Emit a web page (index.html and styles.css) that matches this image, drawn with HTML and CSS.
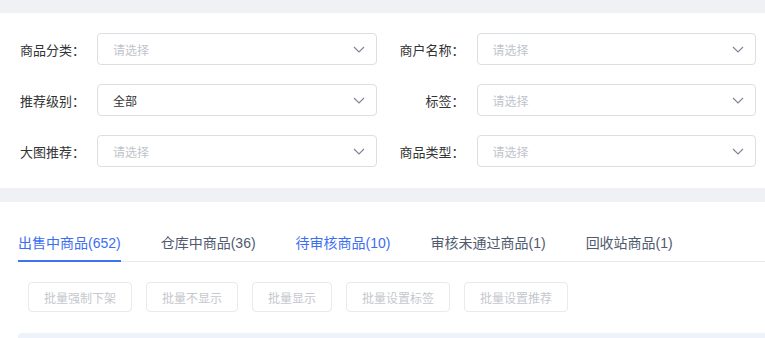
FILE: index.html
```html
<!DOCTYPE html>
<html lang="zh-CN">
<head>
    <meta charset="UTF-8">
    <meta name="viewport" content="width=device-width, initial-scale=1.0">
    <title>商品管理</title>
    <link rel="stylesheet" href="styles.css">
</head>
<body>
    <!-- Filter form -->
    <div class="filter-card">
        <form class="filter-grid">
            <div class="form-item">
                <label class="form-label">商品分类：</label>
                <div class="select placeholder"><span>请选择</span><svg class="arrow" viewBox="0 0 12 12"><polyline points="1,4 6,9 11,4"/></svg></div>
            </div>
            <div class="form-item">
                <label class="form-label">商户名称：</label>
                <div class="select placeholder"><span>请选择</span><svg class="arrow" viewBox="0 0 12 12"><polyline points="1,4 6,9 11,4"/></svg></div>
            </div>
            <div class="form-item">
                <label class="form-label">推荐级别：</label>
                <div class="select"><span>全部</span><svg class="arrow" viewBox="0 0 12 12"><polyline points="1,4 6,9 11,4"/></svg></div>
            </div>
            <div class="form-item">
                <label class="form-label">标签：</label>
                <div class="select placeholder"><span>请选择</span><svg class="arrow" viewBox="0 0 12 12"><polyline points="1,4 6,9 11,4"/></svg></div>
            </div>
            <div class="form-item">
                <label class="form-label">大图推荐：</label>
                <div class="select placeholder"><span>请选择</span><svg class="arrow" viewBox="0 0 12 12"><polyline points="1,4 6,9 11,4"/></svg></div>
            </div>
            <div class="form-item">
                <label class="form-label">商品类型：</label>
                <div class="select placeholder"><span>请选择</span><svg class="arrow" viewBox="0 0 12 12"><polyline points="1,4 6,9 11,4"/></svg></div>
            </div>
        </form>
    </div>

    <!-- Goods list -->
    <div class="list-card">
        <div class="tabs">
            <div class="tab active">出售中商品(652)</div>
            <div class="tab">仓库中商品(36)</div>
            <div class="tab hover">待审核商品(10)</div>
            <div class="tab">审核未通过商品(1)</div>
            <div class="tab">回收站商品(1)</div>
        </div>

        <div class="toolbar">
            <button type="button" disabled>批量强制下架</button>
            <button type="button" disabled>批量不显示</button>
            <button type="button" disabled>批量显示</button>
            <button type="button" disabled>批量设置标签</button>
            <button type="button" disabled>批量设置推荐</button>
        </div>

        <div class="table-head"></div>
    </div>
</body>
</html>
```

FILE: styles.css
```css
body {
    margin: 0;
    padding-top: 13px;
    background-color: #f0f1f5;
    font-family: "Liberation Sans", "Noto Sans CJK SC", sans-serif;
    color: #333;
}

.filter-card {
    background-color: #fff;
    padding: 20px 9px 21px 17px;
}

.filter-grid {
    display: grid;
    grid-template-columns: 1fr 1fr;
    column-gap: 20px;
    row-gap: 19px;
}

.form-item {
    display: flex;
    align-items: center;
}

.form-label {
    width: 80px;
    flex-shrink: 0;
    padding-right: 12px;
    box-sizing: border-box;
    text-align: right;
    font-size: 13px;
    color: #333;
    white-space: nowrap;
}

.select {
    flex: 1;
    height: 32px;
    display: flex;
    align-items: center;
    justify-content: space-between;
    padding: 0 11px 0 15px;
    box-sizing: border-box;
    border: 1px solid #dcdee2;
    border-radius: 4px;
    font-size: 12px;
    color: #333;
}

.select.placeholder {
    color: #c0c4cc;
}

.arrow {
    width: 12px;
    height: 12px;
    fill: none;
    stroke: #808695;
    stroke-width: 1.2;
}

.list-card {
    margin-top: 14px;
    background-color: #fff;
    padding: 24px 0 0 18px;
}

.tabs {
    display: flex;
    gap: 40px;
    border-bottom: 1px solid #e8eaec;
}

.tab {
    height: 36px;
    line-height: 35px;
    font-size: 14px;
    color: #515a6e;
    border-bottom: 2px solid transparent;
    margin-bottom: -1px;
    box-sizing: border-box;
    white-space: nowrap;
}

.tab.active {
    color: #3d6ef2;
    border-bottom-color: #3d72f5;
}

.tab.hover {
    color: #3d6ef2;
}

.toolbar {
    display: flex;
    gap: 14px;
    margin-top: 20px;
    padding-left: 10px;
}

.toolbar button {
    height: 30px;
    padding: 0 15px;
    background-color: #fff;
    border: 1px solid #e8eaec;
    border-radius: 4px;
    font-family: inherit;
    font-size: 12px;
    color: #c5c8ce;
}

.table-head {
    margin-top: 21px;
    height: 5px;
    background-color: #eef2fb;
    border-radius: 4px 0 0 0;
}
```
